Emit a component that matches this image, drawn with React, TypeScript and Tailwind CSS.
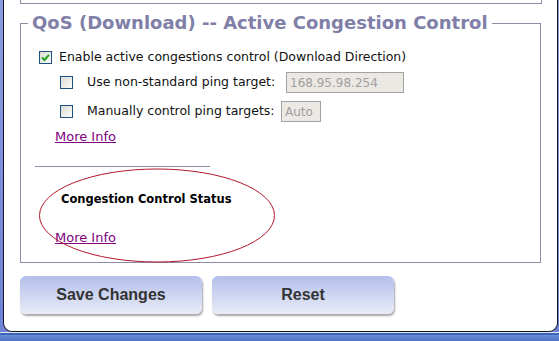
import React from "react";

function Checkbox({ checked }: { checked?: boolean }) {
  return (
    <span className="flex h-[13px] w-[13px] shrink-0 items-center justify-center border border-[#1c5180] bg-gradient-to-br from-[#dcdcd6] to-[#fbfbf9]">
      {checked && (
        <svg width="9" height="9" viewBox="0 0 9 9">
          <path d="M1 4.5 L3.5 7 L8 1.8" fill="none" stroke="#21a121" strokeWidth="2" />
        </svg>
      )}
    </span>
  );
}

function Button({ children }: { children: React.ReactNode }) {
  return (
    <button className="h-[38px] w-[182px] rounded-[6px] bg-gradient-to-b from-[#b3bfea] to-[#e9ecf6] text-[16px] font-bold text-[#333] shadow-[1px_2px_2px_rgba(0,0,0,0.35)] [font-family:'Liberation_Sans',Arial,sans-serif]">
      {children}
    </button>
  );
}

export default function App() {
  return (
    <div className="relative h-[341px] w-[559px] overflow-hidden bg-gradient-to-b from-[#8d9be0] to-[#6d82d6] [font-family:'DejaVu_Sans',Verdana,sans-serif]">
      <div className="ml-[3px] mr-[1px] h-[332px] rounded-b-[9px] border-x border-b border-[#151525] bg-white">
        {/* bottom of the box above */}
        <div className="ml-[16px] h-[4px] w-[522px] border-x border-b border-[#8c8ca8]" />

        <fieldset className="ml-[16px] mt-[9px] h-[250px] w-[521px] border border-[#8c8ca8]">
          <legend className="ml-[7px] px-[4px] text-[18px] leading-[20px] font-bold text-[#7f7fa8]">
            QoS (Download) -- Active Congestion Control
          </legend>

          <div className="flex flex-col whitespace-nowrap text-[12.5px] text-[#111]">
            <div className="mt-[14px] flex h-[20px] items-center pl-[18px]">
              <Checkbox checked />
              <span className="ml-[7px]">Enable active congestions control (Download Direction)</span>
            </div>

            <div className="mt-[5px] flex h-[21px] items-center pl-[39px]">
              <Checkbox />
              <span className="ml-[14px] w-[199px]">Use non-standard ping target:</span>
              <span className="flex h-[21px] w-[118px] items-center border border-[#a2a2a2] bg-[#ece9e4] pl-[3px] text-[12px] text-[#a0a0a0]">
                168.95.98.254
              </span>
            </div>

            <div className="mt-[8px] flex h-[21px] items-center pl-[39px]">
              <Checkbox />
              <span className="ml-[14px] w-[194px]">Manually control ping targets:</span>
              <span className="flex h-[21px] w-[40px] items-center border border-[#a2a2a2] bg-[#ece9e4] pl-[3px] text-[12px] text-[#a0a0a0]">
                Auto
              </span>
            </div>

            <div className="mt-[7px] h-[16px] pl-[34px] text-[13px] leading-[16px]">
              <a href="#" className="text-[#800080] underline">More Info</a>
            </div>

            <div className="ml-[14px] mt-[21px] h-px w-[175px] bg-[#8c8ca8]" />

            <div className="mt-[24px] h-[16px] pl-[40px] text-[11.5px] leading-[16px] font-bold text-black">
              Congestion Control Status
            </div>

            <div className="mt-[23px] h-[16px] pl-[34px] text-[13px] leading-[16px]">
              <a href="#" className="text-[#800080] underline">More Info</a>
            </div>
          </div>
        </fieldset>

        <div className="ml-[16px] mt-[13px] flex gap-[10px]">
          <Button>Save Changes</Button>
          <Button>Reset</Button>
        </div>
      </div>

      <div className="h-px bg-[#dfe5f5]" />
      <div className="h-[2px] bg-[#3a64b6]" />
      <div className="h-[6px] bg-gradient-to-b from-[#6d8ed8] to-[#4f74c6]" />

      <svg className="pointer-events-none absolute left-0 top-0" width="559" height="341">
        <ellipse cx="157" cy="215.5" rx="117.5" ry="46.5" fill="none" stroke="#b0182a" strokeWidth="1" />
      </svg>
    </div>
  );
}
